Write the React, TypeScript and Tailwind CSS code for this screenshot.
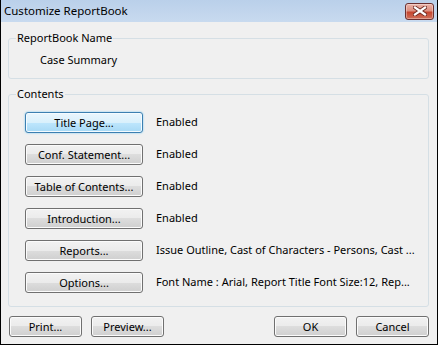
import React from 'react';

const font = "font-['Noto_Sans','Liberation_Sans',sans-serif]";

const Button: React.FC<{ label: string; w?: string; focused?: boolean }> = ({ label, w = 'w-[118px]', focused }) => (
  <button
    className={`${w} h-[21px] shrink-0 rounded-[3px] border text-[11px] leading-none text-black ${
      focused
        ? 'border-[#3c7fb1] bg-[linear-gradient(#eaf6fd_0%,#d9f0fc_50%,#bee6fd_50%,#a7d9f5_100%)] shadow-[inset_0_0_0_1px_#f4fbff,0_0_2px_#6fc7f2]'
        : 'border-[#707070] bg-[linear-gradient(#f2f2f2_0%,#ebebeb_50%,#dddddd_50%,#cfcfcf_100%)] shadow-[inset_0_0_0_1px_#fbfbfb]'
    }`}
  >
    {label}
  </button>
);

const CloseButton: React.FC = () => (
  <div className="flex h-[17px] w-[29px] items-center justify-center rounded-[3px] border border-[#6b3030] bg-[linear-gradient(#ebb3a8_0%,#dc8f80_45%,#c5452f_55%,#d0715b_100%)] shadow-[inset_0_0_0_1px_rgba(255,255,255,0.35)]">
    <svg width="14" height="10" viewBox="0 0 14 10">
      <path d="M2 1.5 L12 8.5 M12 1.5 L2 8.5" stroke="#6e2a22" strokeWidth="4" strokeLinecap="square" />
      <path d="M2 1.5 L12 8.5 M12 1.5 L2 8.5" stroke="#ffffff" strokeWidth="2.2" strokeLinecap="square" />
    </svg>
  </div>
);

const rows = [
  { label: 'Title Page...', value: 'Enabled', focused: true },
  { label: 'Conf. Statement...', value: 'Enabled' },
  { label: 'Table of Contents...', value: 'Enabled' },
  { label: 'Introduction...', value: 'Enabled' },
  { label: 'Reports...', value: 'Issue Outline, Cast of Characters - Persons, Cast ...' },
  { label: 'Options...', value: 'Font Name : Arial, Report Title Font Size:12, Rep...' },
];

export default function App() {
  return (
    <div className={`${font} flex h-[345px] w-[438px] flex-col border-x border-b border-black bg-[#f0f0f0] text-[11px] text-black`}>
      {/* title bar */}
      <div className="flex h-[22px] shrink-0 items-center justify-between bg-[linear-gradient(#bad0ea,#c8daef)] pl-[3px] pr-[3px]">
        <span className="text-[11.5px]">Customize ReportBook</span>
        <CloseButton />
      </div>

      <div className="flex flex-1 flex-col pl-[7px] pr-[8px]">
        <fieldset className="mt-[8px] h-[49px] rounded-[3px] border border-[#d5dfe5] pl-[31px]">
          <legend className="-ml-[24px] px-[1px] leading-[16px]">ReportBook Name</legend>
          <div className="pt-[6px] leading-[16px]">Case Summary</div>
        </fieldset>

        <fieldset className="mt-[7px] h-[221px] rounded-[3px] border border-[#d5dfe5] pl-[16px]">
          <legend className="-ml-[9px] px-[1px] leading-[16px]">Contents</legend>
          <div className="flex flex-col gap-[11px] pt-[10px]">
            {rows.map((r) => (
              <div key={r.label} className="flex items-center gap-[13px]">
                <Button label={r.label} focused={r.focused} />
                <span className="whitespace-nowrap">{r.value}</span>
              </div>
            ))}
          </div>
        </fieldset>

        <div className="mt-[9px] flex items-center gap-[9px] pl-[1px]">
          <Button label="Print..." w="w-[73px]" />
          <Button label="Preview..." w="w-[73px]" />
          <div className="flex-1" />
          <Button label="OK" w="w-[73px]" />
          <Button label="Cancel" w="w-[73px]" />
        </div>
      </div>
    </div>
  );
}
